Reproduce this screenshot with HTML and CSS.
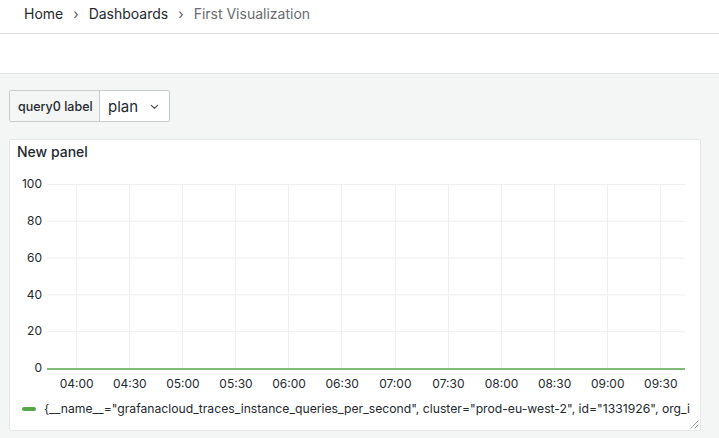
FILE: index.html
```html
<!DOCTYPE html>
<html>
<head>
<meta charset="utf-8">
<link rel="stylesheet" href="styles.css">
</head>
<body>
<header class="topbar">
  <nav class="crumbs">
    <span class="crumb">Home</span>
    <span class="sep">›</span>
    <span class="crumb">Dashboards</span>
    <span class="sep">›</span>
    <span class="crumb current">First Visualization</span>
  </nav>
</header>
<div class="toolbar"></div>
<main class="canvas">
  <div class="vars">
    <div class="var">
      <label class="var-label">query0 label</label>
      <div class="var-select">
        <span>plan</span>
        <svg class="chev" width="10" height="6" viewBox="0 0 10 6"><path d="M1.5 1.2 L5 4.6 L8.5 1.2" fill="none" stroke="#4a4d52" stroke-width="1.4" stroke-linecap="round" stroke-linejoin="round"/></svg>
      </div>
    </div>
  </div>
  <section class="panel">
    <div class="panel-head">New panel</div>
    <svg class="chart" width="690" height="228" viewBox="0 0 690 228">
      <g class="grid" stroke="#efefef" stroke-width="1">
        <line x1="37" y1="16.5" x2="675" y2="16.5"/>
        <line x1="37" y1="53.3" x2="675" y2="53.3"/>
        <line x1="37" y1="90.1" x2="675" y2="90.1"/>
        <line x1="37" y1="126.9" x2="675" y2="126.9"/>
        <line x1="37" y1="163.7" x2="675" y2="163.7"/>
        <line x1="66.5" y1="16" x2="66.5" y2="201"/>
        <line x1="119.5" y1="16" x2="119.5" y2="201"/>
        <line x1="172.5" y1="16" x2="172.5" y2="201"/>
        <line x1="225.5" y1="16" x2="225.5" y2="201"/>
        <line x1="278.5" y1="16" x2="278.5" y2="201"/>
        <line x1="331.5" y1="16" x2="331.5" y2="201"/>
        <line x1="385.5" y1="16" x2="385.5" y2="201"/>
        <line x1="438.5" y1="16" x2="438.5" y2="201"/>
        <line x1="491.5" y1="16" x2="491.5" y2="201"/>
        <line x1="544.5" y1="16" x2="544.5" y2="201"/>
        <line x1="597.5" y1="16" x2="597.5" y2="201"/>
        <line x1="650.5" y1="16" x2="650.5" y2="201"/>
      </g>
      <line x1="37" y1="201" x2="675" y2="201" stroke="#56a64b" stroke-width="1.6"/>
      <g class="ylab" text-anchor="end">
        <text x="32" y="20.2">100</text>
        <text x="32" y="57">80</text>
        <text x="32" y="93.8">60</text>
        <text x="32" y="130.6">40</text>
        <text x="32" y="167.4">20</text>
        <text x="32" y="204.2">0</text>
      </g>
      <g class="xlab" text-anchor="middle">
        <text x="66.7" y="219.5">04:00</text>
        <text x="119.8" y="219.5">04:30</text>
        <text x="172.9" y="219.5">05:00</text>
        <text x="226" y="219.5">05:30</text>
        <text x="279.1" y="219.5">06:00</text>
        <text x="332.2" y="219.5">06:30</text>
        <text x="385.3" y="219.5">07:00</text>
        <text x="438.4" y="219.5">07:30</text>
        <text x="491.5" y="219.5">08:00</text>
        <text x="544.6" y="219.5">08:30</text>
        <text x="597.7" y="219.5">09:00</text>
        <text x="650.8" y="219.5">09:30</text>
      </g>
    </svg>
    <div class="legend">
      <span class="swatch"></span>
      <span class="legend-text">{__name__="grafanacloud_traces_instance_queries_per_second", cluster="prod-eu-west-2", id="1331926", org_i</span>
    </div>
    <svg class="resize" width="10" height="10" viewBox="0 0 10 10"><path d="M9 2 L2 9 M9 6 L6 9" stroke="#a0a2a5" stroke-width="1" stroke-linecap="round"/></svg>
  </section>
</main>
</body>
</html>
```

FILE: styles.css
```css
* { box-sizing: border-box; }
html, body {
  margin: 0;
  padding: 0;
  height: 100%;
}
body {
  font-family: Inter, "Noto Sans", sans-serif;
  color: #24292e;
  background: #f4f5f5;
  overflow: hidden;
}
.topbar {
  height: 34px;
  background: #fff;
  border-bottom: 1px solid #e3e4e5;
  display: flex;
  align-items: center;
  padding-left: 24px;
  padding-bottom: 7px;
}
.crumbs {
  display: flex;
  align-items: center;
  font-size: 14px;
}
.crumb { color: #24292e; }
.crumb.current { color: #696c70; }
.sep {
  color: #5a5d61;
  font-size: 14px;
  margin: 0 10px 0 10px;
}
.toolbar {
  height: 40px;
  background: #fff;
  border-bottom: 1px solid #e3e4e5;
}
.canvas {
  padding: 16px 18px 0 9px;
}
.vars {
  display: flex;
  margin-bottom: 17px;
}
.var {
  display: flex;
  height: 32px;
  border: 1px solid #c9cacc;
  border-radius: 2px;
  overflow: hidden;
}
.var-label {
  display: flex;
  align-items: center;
  background: #f4f5f5;
  padding: 0 0 0 8px;
  font-size: 12.5px;
  font-weight: 500;
  white-space: nowrap;
  border-right: 1px solid #c9cacc;
  width: 90px;
}
.var-select {
  display: flex;
  align-items: center;
  background: #fff;
  padding: 0 10px 0 8px;
  font-size: 15px;
  gap: 12px;
  width: 69px;
}
.chev { margin-top: 1px; }
.panel {
  position: relative;
  width: 692px;
  height: 292px;
  background: #fff;
  border: 1px solid #e6e7e8;
  border-radius: 2px;
}
.panel-head {
  height: 28px;
  display: flex;
  align-items: center;
  padding-left: 7px;
  padding-bottom: 5px;
  font-size: 14px;
  font-weight: 500;
}
.chart {
  display: block;
}
.chart text {
  font-family: Inter, "Noto Sans", sans-serif;
  font-size: 12px;
  fill: #24292e;
}
.legend {
  display: flex;
  align-items: center;
  height: 25px;
  padding-left: 12px;
  padding-right: 8px;
  white-space: nowrap;
  font-size: 12.2px;
}
.swatch {
  flex: none;
  width: 14px;
  height: 4px;
  border-radius: 2px;
  background: #56a64b;
  margin-right: 8px;
}
.resize {
  position: absolute;
  right: 1px;
  bottom: 1px;
}
```
